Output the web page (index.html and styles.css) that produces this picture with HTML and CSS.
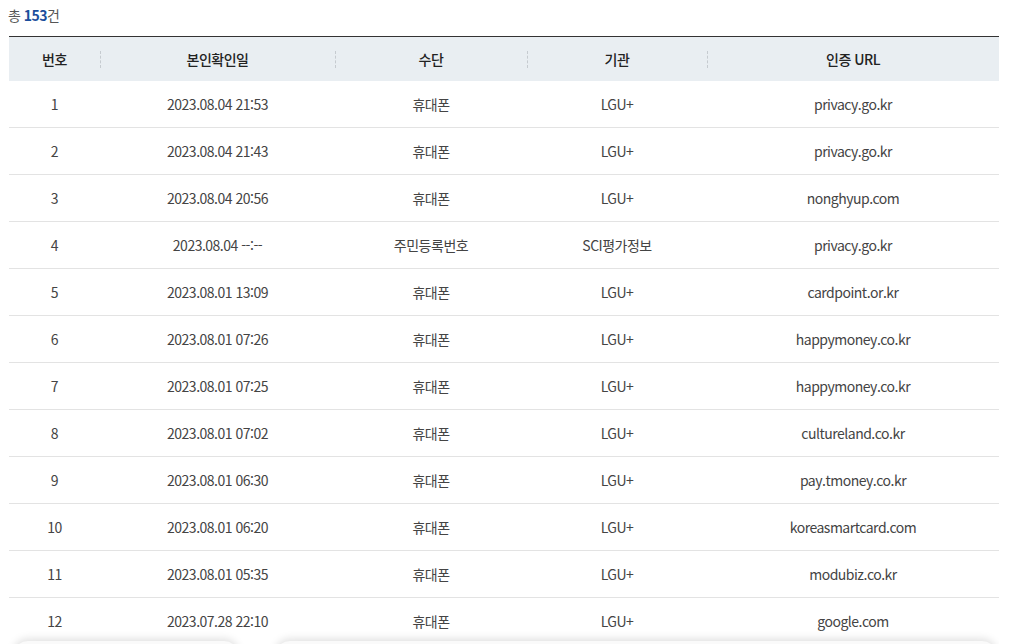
FILE: index.html
```html
<!DOCTYPE html>
<html lang="ko">
<head>
<meta charset="utf-8">
<link rel="stylesheet" href="styles.css">
</head>
<body>
<div class="wrap">
  <p class="total">총 <strong>153</strong>건</p>
  <table class="list">
    <colgroup>
      <col class="c1"><col class="c2"><col class="c3"><col class="c4"><col class="c5">
    </colgroup>
    <thead>
      <tr>
        <th>번호</th><th>본인확인일</th><th>수단</th><th>기관</th><th>인증 URL</th>
      </tr>
    </thead>
    <tbody>
      <tr><td>1</td><td>2023.08.04 21:53</td><td>휴대폰</td><td>LGU+</td><td>privacy.go.kr</td></tr>
      <tr><td>2</td><td>2023.08.04 21:43</td><td>휴대폰</td><td>LGU+</td><td>privacy.go.kr</td></tr>
      <tr><td>3</td><td>2023.08.04 20:56</td><td>휴대폰</td><td>LGU+</td><td>nonghyup.com</td></tr>
      <tr><td>4</td><td>2023.08.04 --:--</td><td>주민등록번호</td><td>SCI평가정보</td><td>privacy.go.kr</td></tr>
      <tr><td>5</td><td>2023.08.01 13:09</td><td>휴대폰</td><td>LGU+</td><td>cardpoint.or.kr</td></tr>
      <tr><td>6</td><td>2023.08.01 07:26</td><td>휴대폰</td><td>LGU+</td><td>happymoney.co.kr</td></tr>
      <tr><td>7</td><td>2023.08.01 07:25</td><td>휴대폰</td><td>LGU+</td><td>happymoney.co.kr</td></tr>
      <tr><td>8</td><td>2023.08.01 07:02</td><td>휴대폰</td><td>LGU+</td><td>cultureland.co.kr</td></tr>
      <tr><td>9</td><td>2023.08.01 06:30</td><td>휴대폰</td><td>LGU+</td><td>pay.tmoney.co.kr</td></tr>
      <tr><td>10</td><td>2023.08.01 06:20</td><td>휴대폰</td><td>LGU+</td><td>koreasmartcard.com</td></tr>
      <tr><td>11</td><td>2023.08.01 05:35</td><td>휴대폰</td><td>LGU+</td><td>modubiz.co.kr</td></tr>
      <tr><td>12</td><td>2023.07.28 22:10</td><td>휴대폰</td><td>LGU+</td><td>google.com</td></tr>
    </tbody>
  </table>
  <div class="shadows">
    <div class="sh sh1"></div>
    <div class="sh sh2"></div>
  </div>
</div>
</body>
</html>
```
FILE: styles.css
```css
html, body {
  margin: 0;
  padding: 0;
  background: #fff;
}
body {
  font-family: "Noto Sans CJK KR", "Noto Sans", sans-serif;
  color: #444;
  font-size: 14px;
  letter-spacing: -0.5px;
}
.wrap {
  width: 990px;
  padding: 0 0 0 9px;
  overflow: hidden;
  height: 644px;
}
.total {
  margin: 0 0 0 -1px;
  padding-top: 4px;
  height: 36px;
  box-sizing: border-box;
  line-height: 22px;
  font-size: 14px;
  color: #555;
}
.total strong {
  color: #1b4e9c;
  font-weight: 700;
}
.list {
  width: 990px;
  border-collapse: collapse;
  table-layout: fixed;
  border-top: 1px solid #333;
}
.c1 { width: 91px; }
.c2 { width: 235px; }
.c3 { width: 192px; }
.c4 { width: 180px; }
.c5 { width: 292px; }
.list th {
  height: 44px;
  padding: 0;
  background: #e9eef2;
  color: #222;
  font-weight: 500;
  font-size: 14px;
  text-align: center;
  position: relative;
}
.list th + th::before {
  content: "";
  position: absolute;
  left: 0;
  top: 14px;
  height: 17px;
  border-left: 1px dashed #c6cbd0;
}
.list td {
  height: 46px;
  padding: 0;
  text-align: center;
  border-bottom: 1px solid #e3e3e3;
  color: #444;
}
.shadows {
  display: flex;
  gap: 36px;
  margin-top: -4px;
  position: relative;
}
.sh {
  height: 30px;
  border-radius: 16px;
  box-shadow: 0 -2px 8px rgba(0,0,0,0.13);
  background: #fafafa;
}
.sh1 { width: 226px; margin-left: 4px; }
.sh2 { flex: 1; margin-right: 2px; }
```
